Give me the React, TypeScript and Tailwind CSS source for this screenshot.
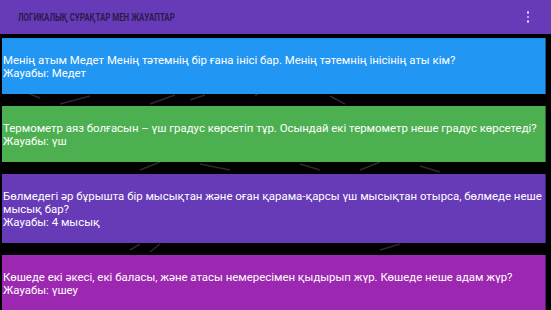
import React from 'react';

interface QA {
  question: string;
  answer: string;
  color: string;
}

const items: QA[] = [
  {
    question: 'Менің атым Медет Менің тәтемнің бір ғана інісі бар. Менің тәтемнің інісінің аты кім?',
    answer: 'Жауабы: Медет',
    color: 'bg-[#2196f3]',
  },
  {
    question: 'Термометр аяз болғасын – үш градус көрсетіп тұр. Осындай екі термометр неше градус көрсетеді?',
    answer: 'Жауабы: үш',
    color: 'bg-[#4caf50]',
  },
  {
    question: 'Бөлмедегі әр бұрышта бір мысықтан және оған қарама-қарсы үш мысықтан отырса, бөлмеде неше мысық бар?',
    answer: 'Жауабы: 4 мысық',
    color: 'bg-[#673ab7]',
  },
  {
    question: 'Көшеде екі әкесі, екі баласы, және атасы немересімен қыдырып жүр. Көшеде неше адам жүр?',
    answer: 'Жауабы: үшеу',
    color: 'bg-[#9c27b0]',
  },
];

/** Faint line art behind the cards */
const Backdrop: React.FC = () => (
  <svg className="absolute inset-0 h-full w-full" viewBox="0 0 551 310" fill="none">
    <g stroke="#2a2a30" strokeWidth={1.5}>
      <path d="M150 104 L175 95 M190 100 L205 95 M255 96 L262 90 M330 96 L345 104" />
      <path d="M60 104 L90 96 M20 90 L40 98" />
      <path d="M140 170 L160 162 M200 164 L230 170 M300 164 L320 170 M360 170 L380 162 M420 166 L440 172" />
      <path d="M130 250 L140 244 M150 252 L160 244 M380 250 L400 244" />
    </g>
  </svg>
);

export default function App() {
  return (
    <div
      className="relative h-[310px] w-[551px] overflow-hidden bg-black"
      style={{ fontFamily: 'Roboto, "Noto Sans", sans-serif' }}
    >
      <Backdrop />

      {/* App bar */}
      <div className="relative z-10 flex h-[34px] items-center justify-between bg-[#673ab7] pl-[18px] pr-[22px] shadow-[0_2px_3px_rgba(0,0,0,0.6)]">
        <span className="origin-left scale-x-[0.79] whitespace-nowrap text-[10px] font-bold text-[#2b1a4d]">
          ЛОГИКАЛЫҚ СҰРАҚТАР МЕН ЖАУАПТАР
        </span>
        <div className="flex flex-col items-center gap-[2px]">
          <span className="h-[2.5px] w-[2.5px] rounded-full bg-[#d9c8f0]" />
          <span className="h-[2.5px] w-[2.5px] rounded-full bg-[#d9c8f0]" />
          <span className="h-[2.5px] w-[2.5px] rounded-full bg-[#d9c8f0]" />
        </div>
      </div>

      {/* Question cards */}
      <div className="relative flex flex-col gap-[12px] pl-[2px] pr-[5px] pt-[4px]">
        {items.map((item) => (
          <div
            key={item.answer}
            className={`${item.color} border-r border-black/40 pb-[14px] pl-[1px] pt-[16px] text-[11.4px] leading-[13px] text-white`}
          >
            <div>{item.question}</div>
            <div>{item.answer}</div>
          </div>
        ))}
      </div>
    </div>
  );
}
